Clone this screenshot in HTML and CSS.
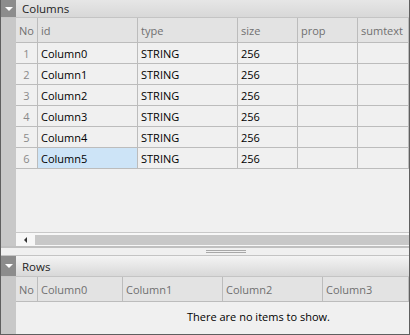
FILE: index.html
```html
<!DOCTYPE html>
<html lang="en">
<head>
  <meta charset="UTF-8" />
  <title>Columns / Rows</title>
  <link rel="stylesheet" href="styles.css">
</head>
<body>

  <div class="frame">
    <div class="bar bar-top">
      <span class="toggle"></span>
      <span class="title">Columns</span>
    </div>
    <div class="section">
      <div class="gutter"></div>
      <div class="content">
        <div class="grid cols">
          <div class="hcell">No</div>
          <div class="hcell">id</div>
          <div class="hcell">type</div>
          <div class="hcell">size</div>
          <div class="hcell">prop</div>
          <div class="hcell">sumtext</div>

          <div class="num">1</div><div class="cell">Column0</div><div class="cell">STRING</div><div class="cell">256</div><div class="cell"></div><div class="cell"></div>
          <div class="num">2</div><div class="cell">Column1</div><div class="cell">STRING</div><div class="cell">256</div><div class="cell"></div><div class="cell"></div>
          <div class="num">3</div><div class="cell">Column2</div><div class="cell">STRING</div><div class="cell">256</div><div class="cell"></div><div class="cell"></div>
          <div class="num">4</div><div class="cell">Column3</div><div class="cell">STRING</div><div class="cell">256</div><div class="cell"></div><div class="cell"></div>
          <div class="num">5</div><div class="cell">Column4</div><div class="cell">STRING</div><div class="cell">256</div><div class="cell"></div><div class="cell"></div>
          <div class="num">6</div><div class="cell selected">Column5</div><div class="cell">STRING</div><div class="cell">256</div><div class="cell"></div><div class="cell"></div>
        </div>
        <div class="empty"></div>
        <div class="hscroll">
          <span class="arrow"></span>
          <span class="thumb"></span>
        </div>
      </div>
    </div>

    <div class="splitter"><span class="grip"></span></div>

    <div class="bar">
      <span class="toggle"></span>
      <span class="title">Rows</span>
    </div>
    <div class="section">
      <div class="gutter"></div>
      <div class="content">
        <div class="grid rows">
          <div class="hcell">No</div>
          <div class="hcell">Column0</div>
          <div class="hcell">Column1</div>
          <div class="hcell">Column2</div>
          <div class="hcell">Column3</div>
        </div>
        <div class="message">There are no items to show.</div>
      </div>
    </div>
  </div>

</body>
</html>
```

FILE: styles.css
```css
body {
  margin: 0;
  font-family: "Open Sans", "Noto Sans", sans-serif;
  font-size: 11px;
  background: #f0f0f0;
}
.frame {
  width: 410px;
  height: 335px;
  box-sizing: border-box;
  border: 1px solid #5f5f5f;
  border-top: none;
  background: #f0f0f0;
  display: flex;
  flex-direction: column;
  overflow: hidden;
}
.bar {
  display: flex;
  align-items: stretch;
  height: 20px;
  flex: none;
  background: linear-gradient(#f4f4f4, #d8d8d8);
  border-bottom: 1px solid #c4c4c4;
}
.bar-top {
  height: 17px;
  background: linear-gradient(#e6e6e6, #d8d8d8);
}
.toggle {
  width: 16px;
  margin-left: -1px;
  background: #8c8c8c;
  position: relative;
}
.toggle::after {
  content: "";
  position: absolute;
  left: 5px;
  top: 50%;
  margin-top: -2px;
  border-left: 4px solid transparent;
  border-right: 4px solid transparent;
  border-top: 4px solid #fff;
}
.title {
  padding-left: 6px;
  display: flex;
  align-items: center;
  color: #1e1e1e;
  font-size: 11.5px;
}
.section {
  display: flex;
  flex: 1;
  min-height: 0;
}
.bar-top + .section {
  flex: none;
  height: 228px;
}
.gutter {
  width: 15px;
  flex: none;
  background: #c8c8c8;
}
.content {
  flex: 1;
  display: flex;
  flex-direction: column;
  min-width: 0;
}
.grid {
  display: grid;
}
.cols {
  grid-template-columns: 22px 100px 100px 60px 60px 1fr;
  grid-auto-rows: 21px;
  grid-template-rows: 25px;
}
.rows {
  grid-template-columns: 22px 85px 100px 100px 1fr;
  grid-template-rows: 25px;
}
.hcell {
  background: #e3e3e3;
  color: #707070;
  border-right: 1px solid #bcbcbc;
  border-bottom: 1px solid #bcbcbc;
  padding-left: 3px;
  display: flex;
  align-items: center;
  white-space: nowrap;
  overflow: hidden;
}
.cell {
  border-right: 1px solid #bcbcbc;
  border-bottom: 1px solid #bcbcbc;
  padding-left: 3px;
  display: flex;
  align-items: center;
  color: #000;
}
.cell.selected {
  background: #cde4f7;
}
.num {
  border-right: 1px solid #bcbcbc;
  border-bottom: 1px solid #bcbcbc;
  color: #8a8a8a;
  display: flex;
  align-items: center;
  justify-content: center;
}
.empty {
  flex: 1;
}
.hscroll {
  flex: none;
  height: 13px;
  border-top: 1px solid #c8c8c8;
  background: #f7f7f7;
  display: flex;
  align-items: center;
}
.arrow {
  width: 0;
  height: 0;
  margin-left: 8px;
  border-top: 3px solid transparent;
  border-bottom: 3px solid transparent;
  border-right: 3px solid #333;
}
.thumb {
  flex: 1;
  height: 10px;
  margin-left: 8px;
  background: #c8c8c8;
}
.splitter {
  flex: none;
  height: 7px;
  border-top: 2px solid #c0c0c0;
  border-bottom: 1px solid #c4c4c4;
  background: #f0f0f0;
  display: flex;
  justify-content: center;
  align-items: center;
}
.grip {
  width: 40px;
  height: 1px;
  margin-left: 42px;
  border-top: 1px solid #a8a8a8;
  border-bottom: 1px solid #a8a8a8;
}
.message {
  padding-left: 171px;
  padding-top: 7px;
  color: #000;
}
```
